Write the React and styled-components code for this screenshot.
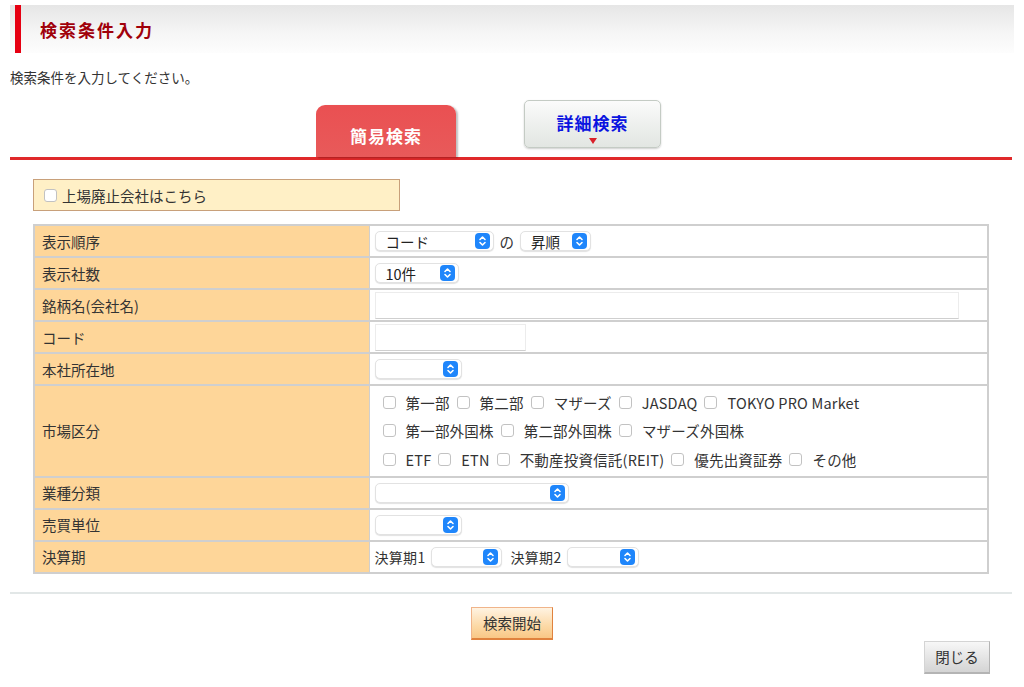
import React from "react";
import styled, { createGlobalStyle } from "styled-components";

const Global = createGlobalStyle`
  html, body { margin: 0; padding: 0; background: #fff; }
  body {
    font-family: "Noto Sans CJK JP", "Noto Sans", "Liberation Sans", sans-serif;
    color: #333;
  }
  * { box-sizing: border-box; }
`;

const Page = styled.div`
  padding: 5px 10px 0 10px;
  width: 1024px;
`;

const Header = styled.div`
  height: 48px;
  width: 1004px;
  background: linear-gradient(#e6e6e6, #f6f6f6 60%, #fdfdfd);
  display: flex;
  align-items: center;
`;

const HeaderBar = styled.div`
  width: 6px;
  align-self: stretch;
  margin-left: 5px;
  background: #e60012;
`;

const HeaderTitle = styled.h1`
  margin: 0 0 0 19px;
  font-size: 17px;
  font-weight: bold;
  letter-spacing: 2px;
  color: #a0000a;
`;

const Intro = styled.p`
  margin: 15px 0 0 0;
  font-size: 13.5px;
  line-height: 18px;
  color: #333;
`;

const TabRow = styled.div`
  margin-top: 14px;
  display: flex;
  align-items: flex-end;
  padding-left: 306px;
  gap: 68px;
  border-bottom: 3px solid #e0292a;
  width: 1002px;
`;

const ActiveTab = styled.div`
  width: 140px;
  height: 52px;
  border-radius: 9px 9px 0 0;
  background: linear-gradient(#ea5052, #e85a5a);
  box-shadow: 2px 1px 2px rgba(0, 0, 0, 0.25);
  color: #fff;
  font-weight: bold;
  font-size: 17px;
  letter-spacing: 1px;
  display: flex;
  align-items: center;
  justify-content: center;
  padding-top: 8px;
`;

const InactiveTab = styled.div`
  width: 137px;
  height: 48px;
  margin-bottom: 9px;
  border: 1px solid #c4cbc4;
  border-radius: 5px;
  background: linear-gradient(#fbfbfb, #eef0ee 50%, #e2e6e2);
  box-shadow: 0 1px 2px rgba(0, 0, 0, 0.2);
  color: #0a14e0;
  font-weight: bold;
  font-size: 17px;
  letter-spacing: 1px;
  display: flex;
  flex-direction: column;
  align-items: center;
  justify-content: center;
  position: relative;
  padding-bottom: 4px;
`;

const TabArrow = styled.span`
  position: absolute;
  left: 50%;
  bottom: 3px;
  transform: translateX(-50%);
  width: 0;
  height: 0;
  border-left: 4px solid transparent;
  border-right: 4px solid transparent;
  border-top: 6px solid #d9202a;
`;

const Content = styled.div`
  padding: 19px 23px 0 23px;
`;

const DelistBox = styled.label`
  display: flex;
  align-items: center;
  width: 367px;
  height: 32px;
  background: #fff0c6;
  border: 1px solid #c8a07a;
  padding-left: 10px;
  font-size: 14.5px;
  color: #333;
`;

const Box = styled.span`
  display: inline-block;
  width: 13px;
  height: 13px;
  border: 1px solid #c2c2c2;
  border-radius: 3px;
  background: #fff;
  flex: none;
  margin-right: ${(p) => p.$gap || 5}px;
`;

const Table = styled.table`
  margin-top: 13px;
  width: 956px;
  border-collapse: collapse;
  border: 2px solid #cfcfcf;
  font-size: 14.5px;
`;

const Th = styled.th`
  width: 335px;
  background: #fed699;
  border: 1px solid #cfcfcf;
  border-width: 2px 1px;
  text-align: left;
  font-weight: normal;
  padding: 0 0 0 7px;
  height: ${(p) => p.$h || 32}px;
  color: #333;
`;

const Td = styled.td`
  border: 1px solid #cfcfcf;
  border-width: 2px 1px;
  padding: 0 5px;
  height: ${(p) => p.$h || 32}px;
  color: #333;
`;

const Inline = styled.div`
  display: flex;
  align-items: center;
`;

const SelectBox = styled.div`
  width: ${(p) => p.$w}px;
  height: 20px;
  border: 1px solid #e2e2e2;
  border-radius: 5px;
  box-shadow: 0 1px 1px rgba(0, 0, 0, 0.12);
  background: #fff;
  display: flex;
  align-items: center;
  justify-content: space-between;
  padding: 0 3px 0 10px;
  font-size: 14.5px;
  color: #222;
`;

const Badge = styled.span`
  width: 15px;
  height: 16px;
  border-radius: 4px;
  background: #1f86fb;
  display: flex;
  align-items: center;
  justify-content: center;
`;

const Word = styled.span`
  margin: 0 ${(p) => p.$m ?? 6}px;
  font-size: 14.5px;
`;

const SmallLabel = styled.span`
  font-size: 14px;
  margin-right: 6px;
  margin-left: ${(p) => p.$ml || 0}px;
  letter-spacing: 0.3px;
`;

const TextInput = styled.div`
  width: ${(p) => p.$w}px;
  height: 27px;
  border: 1px solid #ececec;
  border-bottom-color: #cfcfcf;
  background: #fff;
`;

const MarketCell = styled.div`
  display: flex;
  flex-direction: column;
  padding: 2px 0;
`;

const MarketLine = styled.div`
  display: flex;
  align-items: center;
  height: 28.5px;
  padding-left: 8px;
`;

const MarketItem = styled.span`
  display: inline-flex;
  align-items: center;
  margin-right: 7px;
  font-size: 14.5px;
  letter-spacing: 0.2px;
  white-space: nowrap;
`;

const Divider = styled.div`
  margin-top: 18px;
  width: 1002px;
  height: 2px;
  background: #e2e7e7;
`;

const ButtonRow = styled.div`
  display: flex;
  justify-content: center;
  padding-top: 13px;
  width: 1004px;
`;

const SearchButton = styled.button`
  width: 82px;
  height: 33px;
  border: 1px solid #f0b48a;
  border-bottom: 2px solid #e0823e;
  border-right-color: #e0823e;
  background: linear-gradient(#fff3e2, #fcd9a6 60%, #f9c786);
  font-family: inherit;
  font-size: 14.5px;
  color: #333;
  padding: 0;
`;

const CloseRow = styled.div`
  display: flex;
  justify-content: flex-end;
  padding-right: 24px;
  margin-top: 1px;
  width: 1004px;
`;

const CloseButton = styled.button`
  width: 66px;
  height: 33px;
  border: 1px solid #d4d4d4;
  border-bottom: 2px solid #b4b4b4;
  border-right-color: #b4b4b4;
  background: linear-gradient(#f7f7f7, #e2e2e2 60%, #d4d4d4);
  font-family: inherit;
  font-size: 14.5px;
  color: #333;
  padding: 0;
`;

const Chevrons = () => (
  <svg width="9" height="12" viewBox="0 0 9 12" fill="none" stroke="#fff" strokeWidth="1.6" strokeLinecap="round" strokeLinejoin="round">
    <path d="M2 4.5 L4.5 2 L7 4.5" />
    <path d="M2 7.5 L4.5 10 L7 7.5" />
  </svg>
);

const Select = ({ w, value }) => (
  <SelectBox $w={w}>
    <span>{value || ""}</span>
    <Badge>
      <Chevrons />
    </Badge>
  </SelectBox>
);

const markets = [
  ["第一部", "第二部", "マザーズ", "JASDAQ", "TOKYO PRO Market"],
  ["第一部外国株", "第二部外国株", "マザーズ外国株"],
  ["ETF", "ETN", "不動産投資信託(REIT)", "優先出資証券", "その他"],
];

export default function App() {
  return (
    <Page>
      <Global />
      <Header>
        <HeaderBar />
        <HeaderTitle>検索条件入力</HeaderTitle>
      </Header>
      <Intro>検索条件を入力してください。</Intro>
      <TabRow>
        <ActiveTab>簡易検索</ActiveTab>
        <InactiveTab>
          詳細検索
          <TabArrow />
        </InactiveTab>
      </TabRow>
      <Content>
        <DelistBox>
          <Box $gap={5} />
          上場廃止会社はこちら
        </DelistBox>
        <Table>
          <tbody>
            <tr>
              <Th>表示順序</Th>
              <Td>
                <Inline>
                  <Select w={119} value="コード" />
                  <Word>の</Word>
                  <Select w={71} value="昇順" />
                </Inline>
              </Td>
            </tr>
            <tr>
              <Th>表示社数</Th>
              <Td>
                <Select w={84} value="10件" />
              </Td>
            </tr>
            <tr>
              <Th>銘柄名(会社名)</Th>
              <Td>
                <TextInput $w={584} />
              </Td>
            </tr>
            <tr>
              <Th>コード</Th>
              <Td>
                <TextInput $w={151} />
              </Td>
            </tr>
            <tr>
              <Th>本社所在地</Th>
              <Td>
                <Select w={87} />
              </Td>
            </tr>
            <tr>
              <Th $h={90}>市場区分</Th>
              <Td $h={90}>
                <MarketCell>
                  {markets.map((line, i) => (
                    <MarketLine key={i}>
                      {line.map((m) => (
                        <MarketItem key={m}>
                          <Box $gap={10} />
                          {m}
                        </MarketItem>
                      ))}
                    </MarketLine>
                  ))}
                </MarketCell>
              </Td>
            </tr>
            <tr>
              <Th>業種分類</Th>
              <Td>
                <Select w={194} />
              </Td>
            </tr>
            <tr>
              <Th>売買単位</Th>
              <Td>
                <Select w={87} />
              </Td>
            </tr>
            <tr>
              <Th>決算期</Th>
              <Td>
                <Inline>
                  <SmallLabel>決算期1</SmallLabel>
                  <Select w={71} />
                  <SmallLabel $ml={8}>決算期2</SmallLabel>
                  <Select w={72} />
                </Inline>
              </Td>
            </tr>
          </tbody>
        </Table>
      </Content>
      <Divider />
      <ButtonRow>
        <SearchButton>検索開始</SearchButton>
      </ButtonRow>
      <CloseRow>
        <CloseButton>閉じる</CloseButton>
      </CloseRow>
    </Page>
  );
}
